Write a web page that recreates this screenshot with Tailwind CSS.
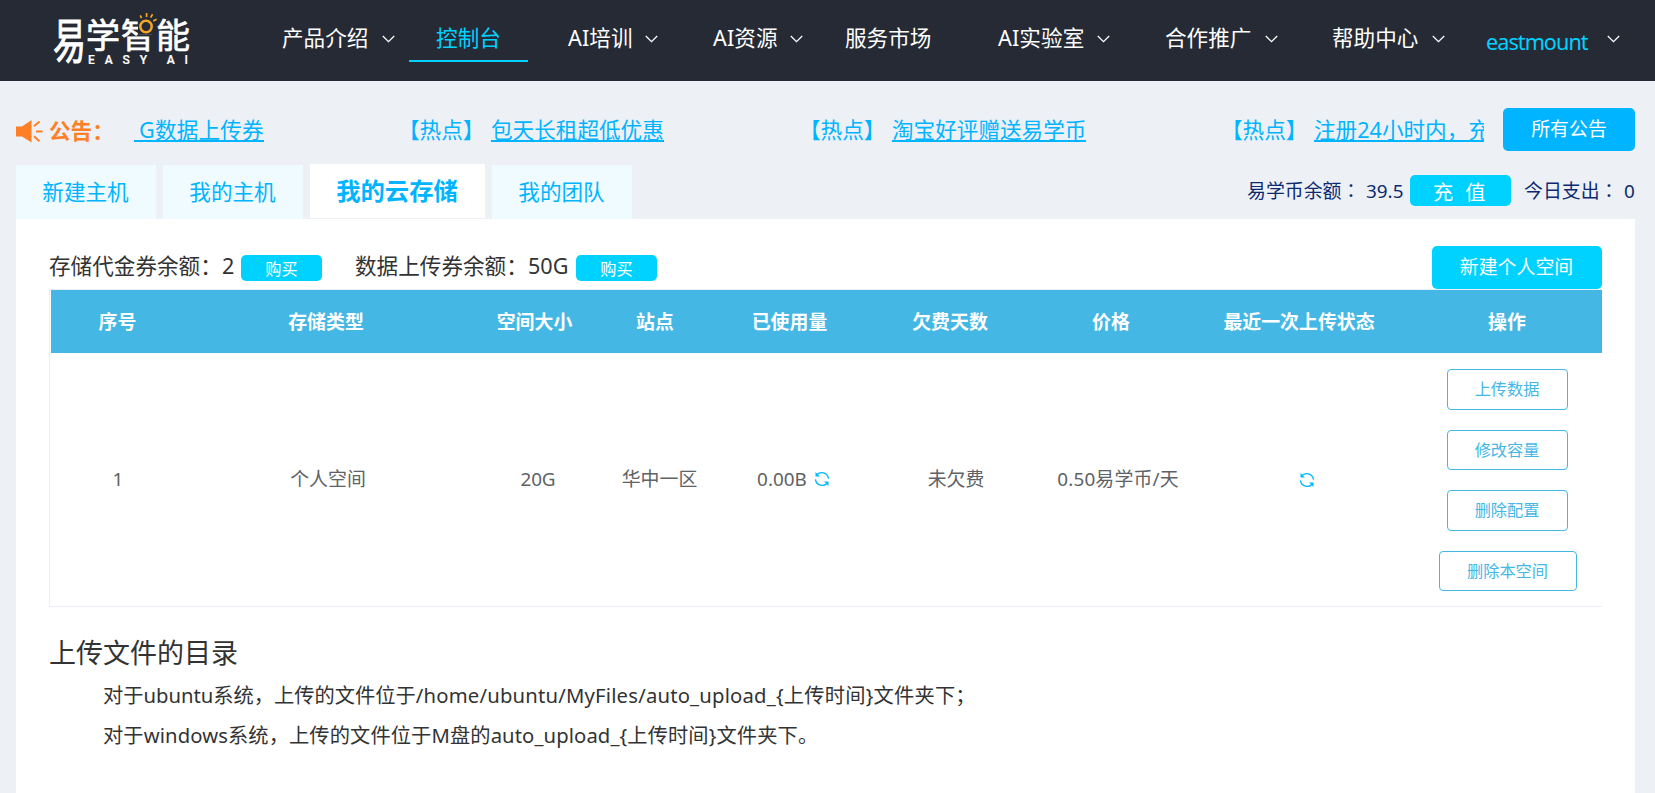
<!DOCTYPE html>
<html lang="zh-CN">
<head>
<meta charset="utf-8">
<title>易学智能</title>
<script src="https://cdn.jsdelivr.net/npm/@tailwindcss/browser@4"></script>
</head>
<body class="w-[1655px] h-[793px] overflow-hidden bg-[#edf1f6] font-['Noto_Sans','Noto_Sans_CJK_SC',sans-serif] text-[#333]">
<svg class="hidden">
  <symbol id="chev" viewBox="0 0 13 8"><path d="M0.8 1 L6.5 6.6 L12.2 1" fill="none" stroke="#fff" stroke-width="1.3"/></symbol>
  <symbol id="refresh" viewBox="0 0 16 16"><path d="M3 3.600 C6.500 0.200 13.200 1 14.600 7.600 M13 12.400 C9.500 15.800 2.600 15 1.400 8.400" fill="none" stroke="#00b8ff" stroke-width="1.400"/><path d="M1.500 1 V5.400 H5.900 Z M14.500 15 V10.600 H10.100 Z" fill="#00b8ff"/></symbol>
</svg>

<header class="h-[81px] bg-[#262a35] flex text-white text-[21.6px] leading-[30px] whitespace-nowrap">
  <div class="relative w-[282px] h-full shrink-0 [-webkit-text-stroke:0.7px_#fff]">
    <div class="absolute left-[53px] top-[18px] h-[46px] w-8 text-[33px] leading-[46px]"><span class="block origin-center scale-y-[1.45]">易</span></div>
    <div class="absolute left-[86px] top-[17px] text-[34px] leading-[37px] tracking-[1px]">学智能</div>
    <div class="absolute left-[88px] top-[54px] flex w-[100px] justify-between text-[12px] leading-[13px] font-medium font-[Roboto] [-webkit-text-stroke:0.2px_#fff]"><span>E</span><span>A</span><span>S</span><span>Y</span><span></span><span>A</span><span>I</span></div>
    <svg class="absolute left-[137px] top-[12px] w-[21px] h-[24px]" viewBox="0 0 21 24"><rect x="1" y="3" width="17" height="19.500" fill="#262a35"/><circle cx="9" cy="14.500" r="5.700" fill="none" stroke="#f5a623" stroke-width="2.500"/><path d="M3.200 3.400 L4.600 6.200 M9.600 1 V5 M15.600 2.300 L13.600 5.600 M19.600 7.200 L16.200 9" stroke="#f5a623" stroke-width="1.700"/></svg>
  </div>
  <nav class="flex pt-[23px] w-[1373px]">
    <div class="w-[127px] flex"><span class="w-[100px]">产品介绍</span><svg class="w-[13px] h-2 mt-[12px]"><use href="#chev"/></svg></div>
    <div class="w-[119px] h-[39px] text-center text-[#00d2ff] border-b-2 border-[#00d2ff]">控制台</div>
    <div class="w-[185px] pl-10 flex"><span class="w-[77px] tracking-[0.1px]">AI培训</span><svg class="w-[13px] h-2 mt-[12px]"><use href="#chev"/></svg></div>
    <div class="w-[132px] flex"><span class="w-[77px] tracking-[0.1px]">AI资源</span><svg class="w-[13px] h-2 mt-[12px]"><use href="#chev"/></svg></div>
    <div class="w-[153px]">服务市场</div>
    <div class="w-[167px] flex"><span class="w-[99px] tracking-[0.1px]">AI实验室</span><svg class="w-[13px] h-2 mt-[12px]"><use href="#chev"/></svg></div>
    <div class="w-[167px] flex"><span class="w-[100px]">合作推广</span><svg class="w-[13px] h-2 mt-[12px]"><use href="#chev"/></svg></div>
    <div class="w-[154px] flex"><span class="w-[100px]">帮助中心</span><svg class="w-[13px] h-2 mt-[12px]"><use href="#chev"/></svg></div>
    <div class="flex"><span class="w-[121px] pt-1 tracking-[-0.95px] text-[#00d2ff]">eastmount</span><svg class="w-[13px] h-2 mt-[12px]"><use href="#chev"/></svg></div>
  </nav>
</header>

<main class="px-4">
  <section class="flex h-[83px] pt-[27px] text-[21.6px] leading-[30px] whitespace-nowrap">
    <svg class="w-[27px] h-[24px] mt-[11px] shrink-0" viewBox="0 0 27 24"><path d="M0 7.500 H6 L15.500 1 V23.500 L6 17.500 H0 Z" fill="#ff7f27"/><path d="M18 7.300 L23.500 2.500 M20 12.400 H26.500 M18 17.300 L23.500 22.300" stroke="#ff7f27" stroke-width="2"/></svg>
    <b class="w-[91px] pl-[6px] pt-2 text-[#ff7f27] shrink-0">公告：</b>
    <div class="w-[1350px] pt-[7px] flex overflow-hidden text-[#00b4ff] shrink-0">
      <a class="w-[264px] shrink-0"><span class="border-b-2 inline-block h-[27px] pl-[5px] tracking-[0.2px]">G数据上传券</span></a>
      <div class="w-[401px] shrink-0 flex"><span class="w-[93px]">【热点】</span><a class="h-[27px] border-b-2">包天长租超低优惠</a></div>
      <div class="w-[422px] shrink-0 flex"><span class="w-[93px]">【热点】</span><a class="h-[27px] border-b-2">淘宝好评赠送易学币</a></div>
      <div class="shrink-0 flex"><span class="w-[93px]">【热点】</span><a class="h-[27px] border-b-2">注册24小时内，充</a></div>
    </div>
    <a class="ml-[19px] w-[132px] h-[43px] rounded-[5px] bg-[#00b4ff] text-white text-[18.9px] leading-[43px] text-center shrink-0">所有公告</a>
  </section>

  <section class="flex h-[55px] text-[21.6px] text-[#00b4ff] whitespace-nowrap">
    <a class="mt-px mr-[7px] w-[140px] pr-px bg-[#effbff] text-center leading-[54px]">新建主机</a>
    <a class="mt-px mr-[7px] w-[140px] pr-px bg-[#effbff] text-center leading-[54px]">我的主机</a>
    <a class="mb-px mr-[7px] w-[175px] pr-px bg-white text-center font-bold text-[24.3px] leading-[54px]">我的云存储</a>
    <a class="mt-px w-[140px] pr-px bg-[#effbff] text-center leading-[54px]">我的团队</a>
    <div class="ml-auto mr-[4px] flex text-[18.9px] leading-[54px] text-[#0c2a72]">
      <span class="w-[119px] font-['Noto_Sans','Noto_Sans_CJK_TC',sans-serif]" lang="zh-CN">易学币余额<span lang="zh-TW">：</span></span>
      <span class="w-[44px]">39.5</span>
      <a class="mt-[11px] w-[101px] h-[31px] rounded-[5px] bg-[#00d2ff] text-white text-[20.25px] leading-[34px] pl-[23px] flex gap-[12px]"><span>充</span><span>值</span></a>
      <span class="ml-[13px] w-[100px] font-['Noto_Sans','Noto_Sans_CJK_TC',sans-serif]" lang="zh-CN">今日支出<span lang="zh-TW">：</span></span><span class="w-[11px]">0</span>
    </div>
  </section>

  <section class="h-[574px] w-[1619px] bg-white pl-[33px] pt-[27px] whitespace-nowrap">
    <div class="flex h-[43px] w-[1553px] text-[21.6px]">
      <span class="w-[173px] leading-[39px]">存储代金券余额：</span><span class="w-[19px] leading-[39px]">2</span>
      <a class="mt-[9px] w-[81px] h-[26px] rounded-[5px] bg-[#00d2ff] text-white text-[16.2px] leading-[29px] text-center">购买</a>
      <span class="ml-[33px] w-[173px] leading-[39px]">数据上传券余额：</span><span class="w-[48px] leading-[39px]">50G</span>
      <a class="mt-[9px] w-[81px] h-[26px] rounded-[5px] bg-[#00d2ff] text-white text-[16.2px] leading-[29px] text-center">购买</a>
      <a class="ml-auto w-[170px] h-[43px] pr-px rounded-[5px] bg-[#00d2ff] text-white text-[18.9px] leading-[43px] text-center">新建个人空间</a>
    </div>
    <div class="w-[1553px] border-l border-t border-b border-[#ebeef5] pl-px text-[18.9px]">
      <div class="grid grid-cols-[133px_284px_133px_108px_162px_158px_164px_219px_190px] h-[63px] bg-[#44b7e5] text-white font-bold text-center leading-[64px]">
        <span>序号</span><span>存储类型</span><span>空间大小</span><span>站点</span><span class="pr-px">已使用量</span><span>欠费天数</span><span>价格</span><span class="pr-[7px]">最近一次上传状态</span><span>操作</span>
      </div>
      <div class="grid grid-cols-[133px_284px_133px_108px_162px_158px_164px_219px_190px] h-[253px] items-center text-center text-[#606266]">
        <span class="pl-px">1</span><span class="pl-1">个人空间</span><span class="pl-[7px] tracking-[-0.1px]">20G</span><span class="pl-[9px]">华中一区</span>
        <span class="flex items-center pl-[48px] gap-[7px]"><span class="w-[50px]">0.00B</span><svg class="w-4 h-4"><use href="#refresh"/></svg></span>
        <span class="pl-[12px]">未欠费</span><span class="pl-[14px] tracking-[0.15px]">0.50易学币/天</span>
        <span class="flex justify-center pl-[9px]"><svg class="w-4 h-4"><use href="#refresh"/></svg></span>
        <div class="flex flex-col items-center gap-5 self-start pt-4 text-[16.2px] leading-[38px] text-[#44b7e5]">
          <a class="w-[121px] h-[41px] rounded border border-[#44b7e5]">上传数据</a>
          <a class="w-[121px] h-[40px] rounded border border-[#44b7e5]">修改容量</a>
          <a class="w-[121px] h-[41px] rounded border border-[#44b7e5]">删除配置</a>
          <a class="w-[138px] h-[40px] ml-px rounded border border-[#44b7e5]">删除本空间</a>
        </div>
      </div>
    </div>
    <h2 class="mt-[26px] h-10 text-[27px] leading-[40px]">上传文件的目录</h2>
    <p class="mt-[2px] pl-[54px] h-10 text-[20.25px] leading-[40px]"><span>对于ubuntu系统，上传的文件位于</span><span class="tracking-[0.2px]">/home/ubuntu/MyFiles/auto_upload_{上传时间}文件夹下；</span></p>
    <p class="pl-[54px] h-10 text-[20.25px] leading-[40px]"><span class="tracking-[0.1px]">对于windows系统，上传的文件位于M盘的auto_upload_{上传时间}文件夹下。</span></p>
  </section>
</main>
</body>
</html>
